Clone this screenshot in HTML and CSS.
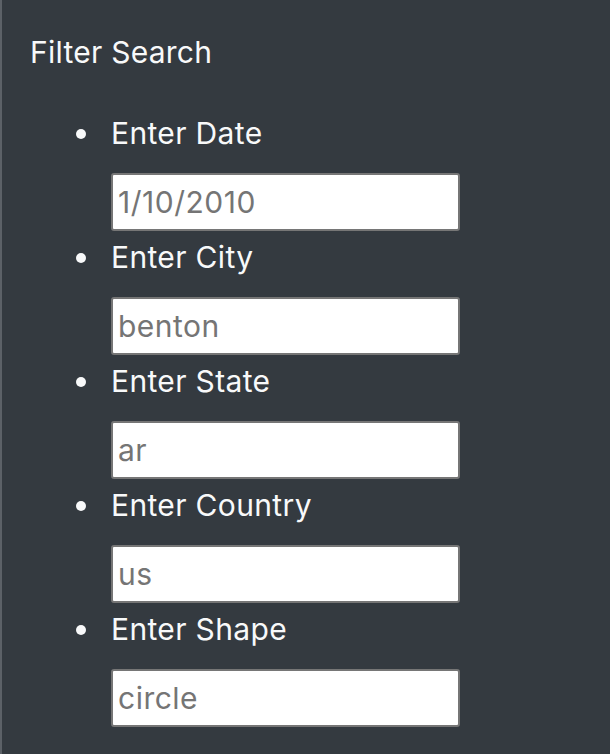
FILE: index.html
```html
<!DOCTYPE html>
<html lang="en">
<head>
<meta charset="utf-8">
<title>Filter Search</title>
<link rel="stylesheet" href="styles.css">
</head>
<body>
<aside class="sidebar">
  <h5 class="title">Filter Search</h5>
  <form class="filters">
    <ul class="filter-list">
      <li class="filter-item">
        <label class="filter-label" for="datetime">Enter Date</label>
        <input class="filter-input" id="datetime" type="text" placeholder="1/10/2010">
      </li>
      <li class="filter-item">
        <label class="filter-label" for="city">Enter City</label>
        <input class="filter-input" id="city" type="text" placeholder="benton">
      </li>
      <li class="filter-item">
        <label class="filter-label" for="state">Enter State</label>
        <input class="filter-input" id="state" type="text" placeholder="ar">
      </li>
      <li class="filter-item">
        <label class="filter-label" for="country">Enter Country</label>
        <input class="filter-input" id="country" type="text" placeholder="us">
      </li>
      <li class="filter-item">
        <label class="filter-label" for="shape">Enter Shape</label>
        <input class="filter-input" id="shape" type="text" placeholder="circle">
      </li>
    </ul>
  </form>
</aside>
</body>
</html>
```

FILE: styles.css
```css
html, body {
  margin: 0;
  padding: 0;
  height: 100%;
}

body {
  background: #343a40;
  font-family: "Inter", "Liberation Sans", sans-serif;
  color: #f8f9fa;
}

.sidebar {
  box-sizing: border-box;
  min-height: 100vh;
  border-left: 2px solid #5c6167;
  padding: 31px 0 0 28px;
}

.title {
  margin: 0;
  font-size: 30px;
  font-weight: 400;
  line-height: 43px;
  letter-spacing: 0.25px;
}

.filters {
  margin: 37px 0 0 0;
}

.filter-list {
  list-style: none;
  margin: 0;
  padding: 0 0 0 81px;
}

.filter-item {
  display: flex;
  flex-direction: column;
  align-items: flex-start;
  margin-bottom: 4px;
}

.filter-label {
  display: flex;
  align-items: center;
  font-size: 30px;
  line-height: 43px;
  letter-spacing: 0.35px;
  margin: 1px 0 18px -1px;
}

.filter-label::before {
  content: "";
  display: inline-block;
  width: 10px;
  height: 10px;
  border-radius: 50%;
  background: #f8f9fa;
  margin-left: -34px;
  margin-right: 25px;
}

.filter-input {
  box-sizing: border-box;
  width: 349px;
  height: 58px;
  margin: 0;
  padding: 0 5px;
  border: 2px solid #767676;
  border-radius: 3px;
  background: #ffffff;
  font-family: "Inter", "Liberation Sans", sans-serif;
  font-size: 30px;
  letter-spacing: 0.5px;
  color: #333;
}

.filter-input::placeholder {
  color: #757575;
  opacity: 1;
}
```
